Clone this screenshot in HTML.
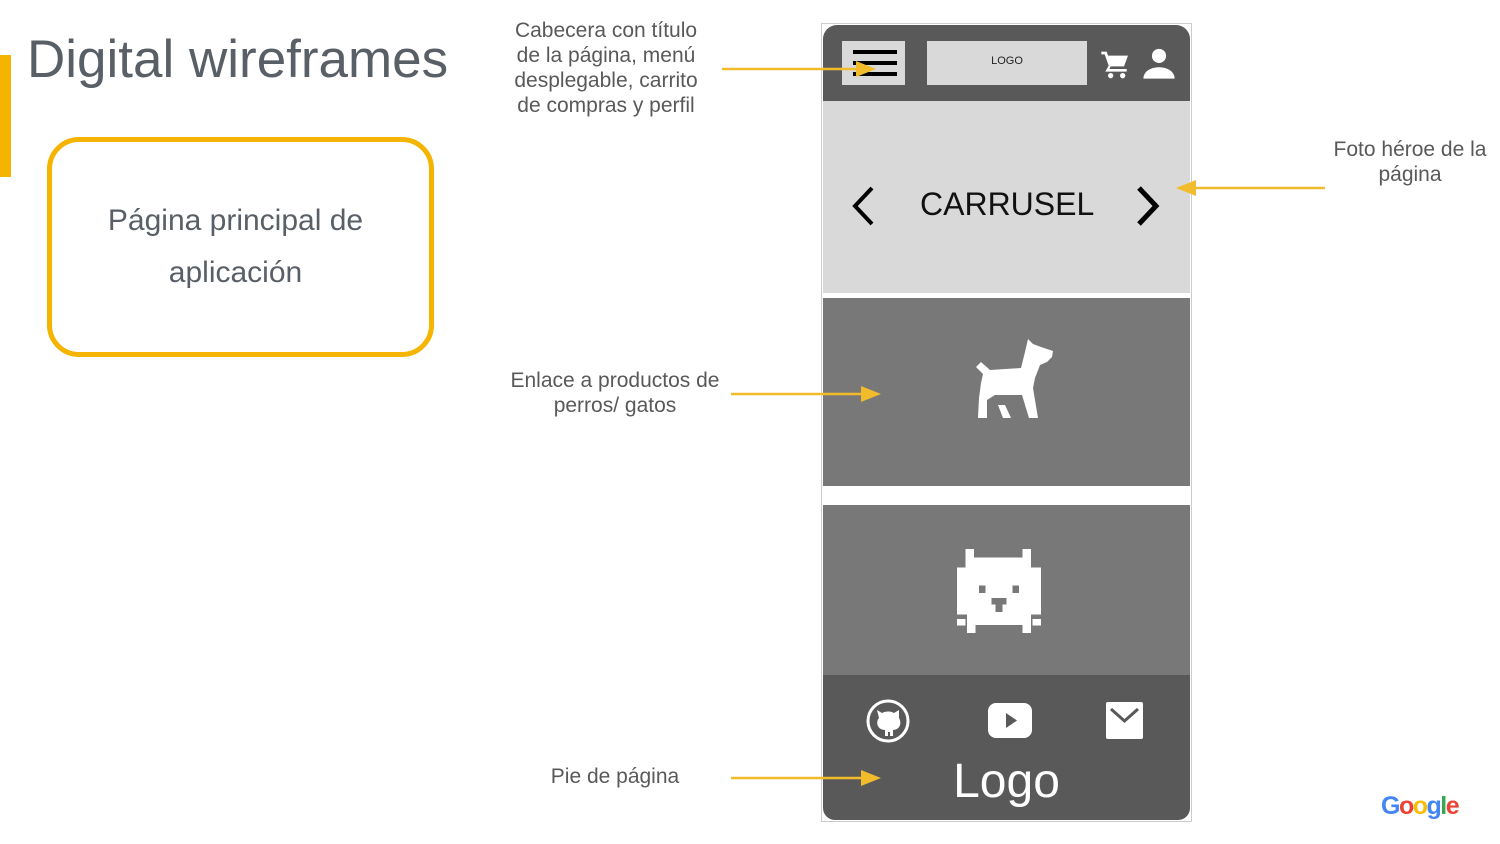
<!DOCTYPE html>
<html><head><meta charset="utf-8"><style>
body{margin:0;width:1500px;height:844px;background:#fff;position:relative;overflow:hidden;font-family:"Liberation Sans","DejaVu Sans",sans-serif;color:#5f6368}
.a{position:absolute}
.note{position:absolute;font-size:21px;line-height:25px;text-align:center;color:#595959;white-space:nowrap}
</style></head><body>
<div class="a" style="left:0;top:55px;width:11px;height:122px;background:#f4b400"></div>
<div class="a" style="left:27px;top:29px;font-size:53px;line-height:62px;color:#595f66">Digital wireframes</div>
<div class="a" style="left:47px;top:137px;width:377px;height:210px;border:5px solid #f4b400;border-radius:32px"></div>
<div class="a" style="left:52px;top:195px;width:367px;text-align:center;font-size:30px;line-height:52px;color:#595f66">Página principal de<br>aplicación</div>

<div class="note" style="left:500px;top:18px;width:212px">Cabecera con título<br>de la página, menú<br>desplegable, carrito<br>de compras y perfil</div>
<div class="note" style="left:500px;top:368px;width:230px">Enlace a productos de<br>perros/ gatos</div>
<div class="note" style="left:520px;top:764px;width:190px">Pie de página</div>
<div class="note" style="left:1322px;top:137px;width:176px">Foto héroe de la<br>página</div>

<div class="a" style="left:821px;top:23px;width:369px;height:797px;border:1px solid #ccc;background:#fff"></div>
<div class="a" style="left:823px;top:25px;width:367px;height:76px;background:#595959;border-radius:14px 14px 0 0"></div>
<div class="a" style="left:842px;top:41px;width:63px;height:44px;background:#d9d9d9"></div>
<div class="a" style="left:853px;top:50px;width:44px;height:4px;background:#000"></div>
<div class="a" style="left:853px;top:61px;width:44px;height:4px;background:#000"></div>
<div class="a" style="left:853px;top:72px;width:44px;height:4px;background:#000"></div>
<div class="a" style="left:927px;top:41px;width:160px;height:44px;background:#d9d9d9;font-size:11px;line-height:40px;text-align:center;color:#222">LOGO</div>
<svg class="a" style="left:1100px;top:48px" width="32" height="34" viewBox="0 0 24 24"><path fill="#fff" d="M1 2h4l1 3h15l-3 8H8l-1 2h13v2H4l2.5-4.5L3.5 4H1z"/><circle cx="8" cy="20" r="2" fill="#fff"/><circle cx="17" cy="20" r="2" fill="#fff"/></svg>
<svg class="a" style="left:1142px;top:46px" width="34" height="34" viewBox="0 0 24 24"><circle cx="12" cy="7" r="5" fill="#fff"/><path fill="#fff" d="M1 23c0-5 5-8 11-8s11 3 11 8z"/></svg>

<div class="a" style="left:823px;top:101px;width:367px;height:192px;background:#d9d9d9"></div>
<div class="a" style="left:920px;top:184px;font-size:32px;line-height:40px;color:#111">CARRUSEL</div>
<svg class="a" style="left:840px;top:180px" width="340" height="50"><polyline points="32,8 15,26 32,44" fill="none" stroke="#000" stroke-width="4"/><polyline points="299,8 316,26 299,44" fill="none" stroke="#000" stroke-width="5"/></svg>

<div class="a" style="left:823px;top:298px;width:367px;height:188px;background:#787878"></div>
<svg class="a" style="left:975px;top:338px" width="82" height="82" viewBox="0 0 82 82"><path fill="#fff" d="M53 1L58 6L66 9L78 13L77 19L72 24L65 27L60 40L58 50L63 80L54 80L47 57L20 57L12 62L12 80L3 80L4 60L6 45L8 36L1 29L6 24L15 32L46 30L50 14Z"/><path fill="#fff" d="M23 67h7l6 13h-8z"/></svg>

<div class="a" style="left:823px;top:505px;width:367px;height:170px;background:#787878"></div>
<svg class="a" style="left:957px;top:549px" width="84" height="86" viewBox="0 0 10 10.2" shape-rendering="crispEdges">
<g fill="#fff">
<rect x="1" y="0" width="1" height="1.2"/><rect x="7.8" y="0" width="1" height="1.2"/>
<rect x="1" y="1" width="7.8" height="1.2"/>
<rect x="0" y="2.2" width="10" height="5.8"/>
<rect x="1.2" y="8" width="7.6" height="1"/>
<rect x="0" y="8.2" width="1" height="0.9"/><rect x="9" y="8.2" width="1" height="0.9"/>
<rect x="1.2" y="9" width="1" height="1"/><rect x="7.8" y="9" width="1" height="1"/>
</g>
<g fill="#787878"><rect x="2.6" y="4.3" width="0.8" height="0.9"/><rect x="6.6" y="4.3" width="0.8" height="0.9"/><rect x="4.1" y="5.8" width="1.8" height="0.8"/><rect x="4.6" y="6.6" width="0.8" height="0.9"/><rect x="0" y="7.8" width="1.2" height="0.5"/><rect x="8.8" y="7.8" width="1.2" height="0.5"/></g>
</svg>

<div class="a" style="left:823px;top:675px;width:367px;height:145px;background:#595959;border-radius:0 0 12px 12px"></div>
<svg class="a" style="left:865px;top:698px" width="46" height="46" viewBox="0 0 46 46"><circle cx="23" cy="23" r="20" fill="none" stroke="#fff" stroke-width="3"/><path fill="#fff" d="M12 12l5 3c4-2 8-2 12 0l5-3v8c3 5 1 12-6 12v6h-3v-4h-2v4h-3v-6c-7 0-10-7-6-12z"/></svg>
<div class="a" style="left:988px;top:703px;width:44px;height:35px;background:#fff;border-radius:8px"></div>
<svg class="a" style="left:988px;top:703px" width="44" height="35"><polygon points="18,10 29,17.5 18,25" fill="#595959"/></svg>
<svg class="a" style="left:1106px;top:702px" width="38" height="38"><rect width="37" height="37" rx="2" fill="#fff"/><polyline points="5,7 18.5,19 32,7" fill="none" stroke="#595959" stroke-width="3"/></svg>
<div class="a" style="left:823px;top:752px;width:367px;text-align:center;font-size:48px;line-height:60px;color:#fff">Logo</div>

<svg class="a" style="left:0;top:0" width="1500" height="844">
<g fill="#f1bb2b" stroke="#f1bb2b">
<line x1="722" y1="69" x2="858" y2="69" stroke-width="2.5"/><polygon points="856,61 876,69 856,77" stroke="none"/>
<line x1="731" y1="394" x2="862" y2="394" stroke-width="2.5"/><polygon points="861,386 881,394 861,402" stroke="none"/>
<line x1="731" y1="778" x2="862" y2="778" stroke-width="2.5"/><polygon points="861,770 881,778 861,786" stroke="none"/>
<line x1="1325" y1="188" x2="1192" y2="188" stroke-width="2.5"/><polygon points="1196,180 1176,188 1196,196" stroke="none"/>
</g>
</svg>

<div class="a" style="left:1381px;top:789px;font-size:25px;font-weight:bold;letter-spacing:-1.5px;line-height:34px"><span style="color:#4285f4">G</span><span style="color:#ea4335">o</span><span style="color:#fbbc05">o</span><span style="color:#4285f4">g</span><span style="color:#34a853">l</span><span style="color:#ea4335">e</span></div>
</body></html>
